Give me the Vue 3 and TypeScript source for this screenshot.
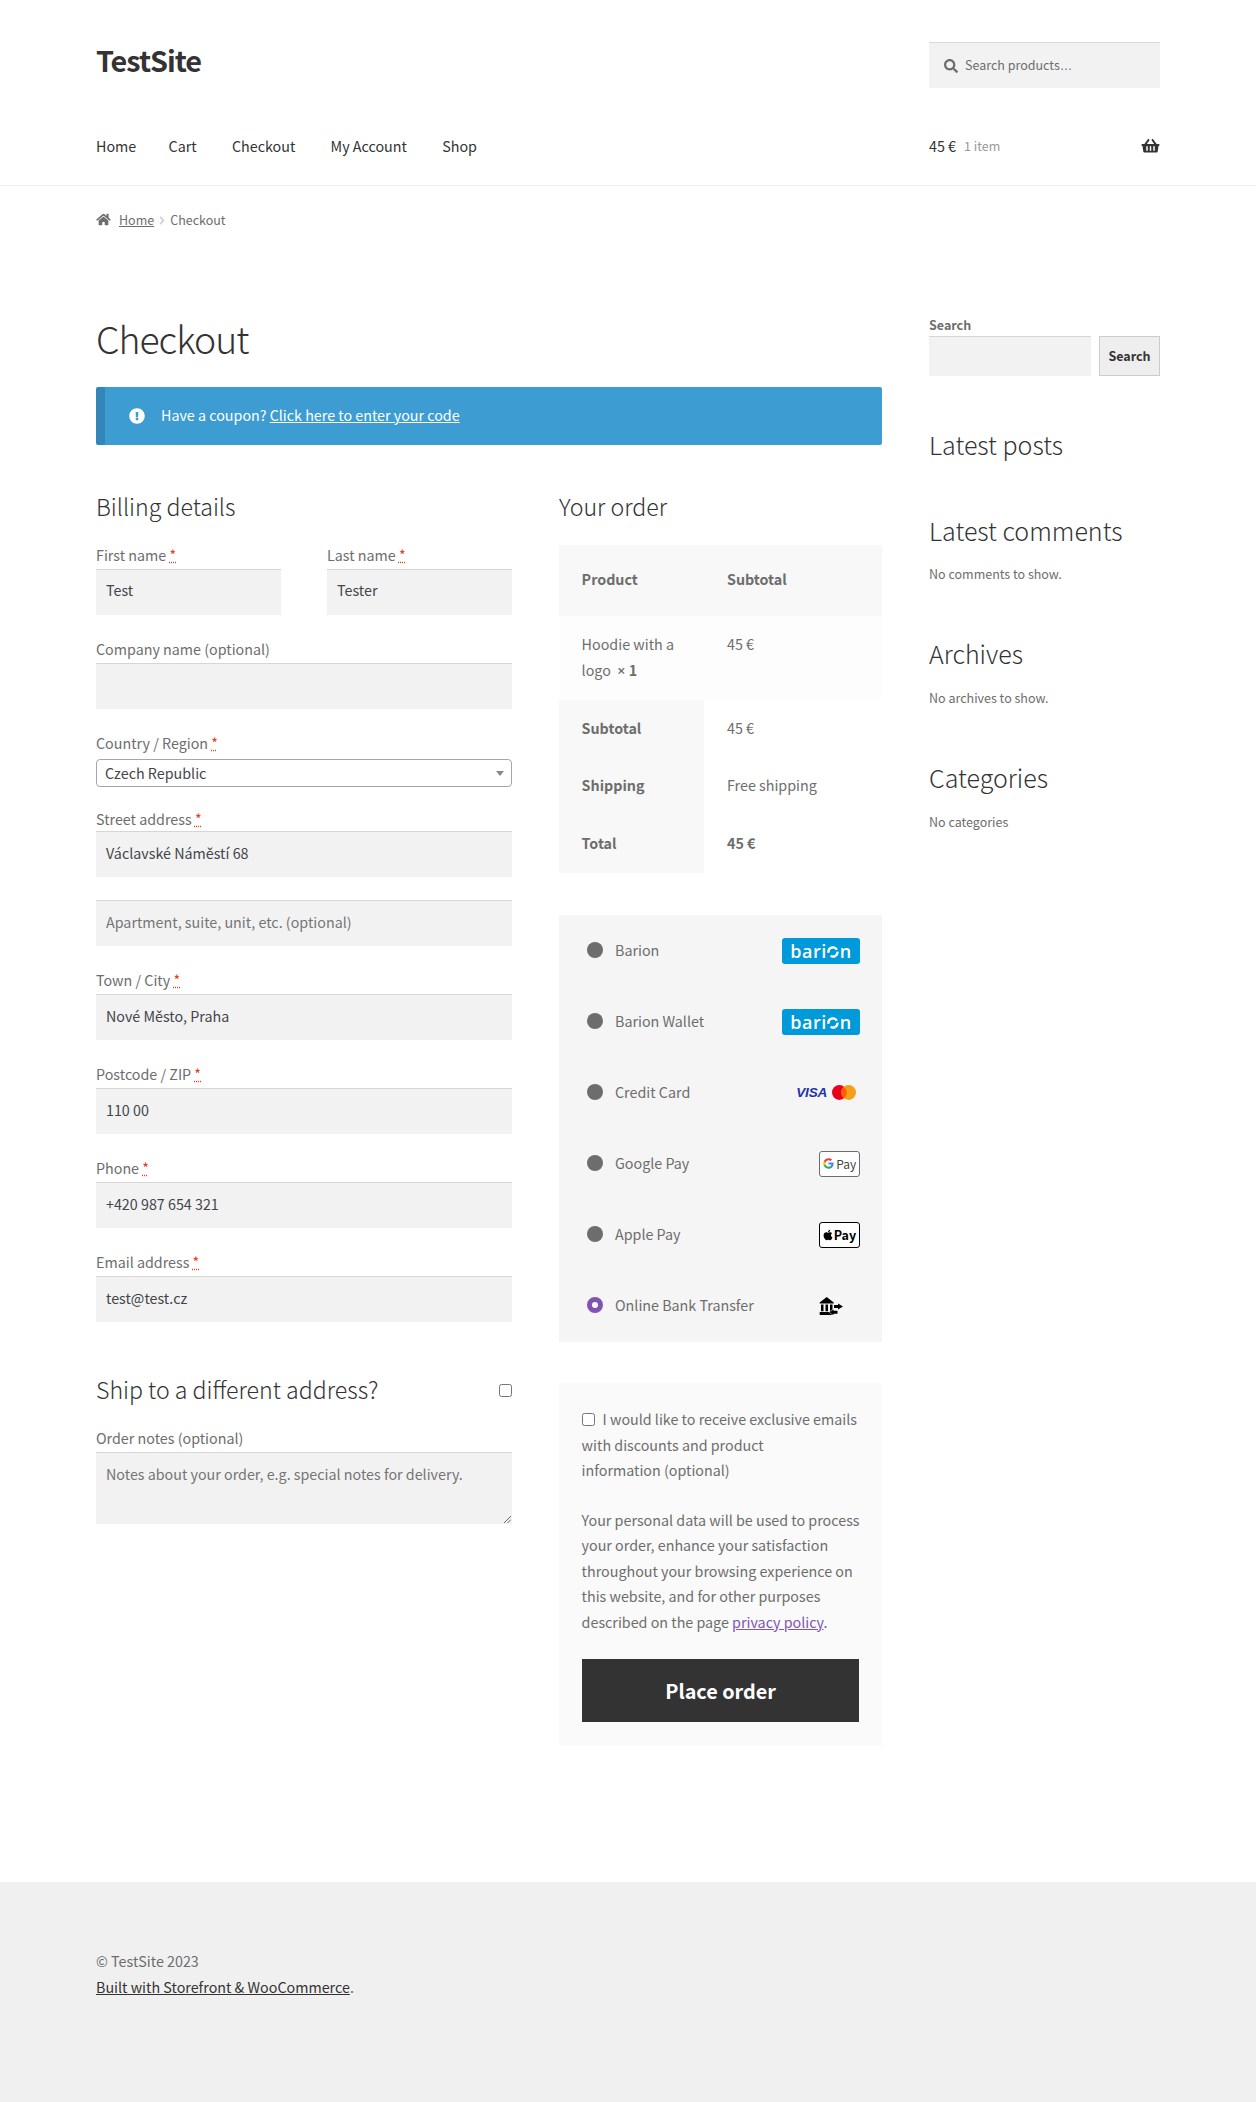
<script setup lang="ts">
interface Field { label: string; value?: string; req?: boolean }
const billingBottom: Field[] = [
  { label: 'Town / City', value: 'Nové Město, Praha', req: true },
  { label: 'Postcode / ZIP', value: '110 00', req: true },
  { label: 'Phone', value: '+420 987 654 321', req: true },
  { label: 'Email address', value: 'test@test.cz', req: true },
]
const nav = ['Home', 'Cart', 'Checkout', 'My Account', 'Shop']
const methods = [
  { name: 'Barion', logo: 'barion' },
  { name: 'Barion Wallet', logo: 'barion' },
  { name: 'Credit Card', logo: 'card' },
  { name: 'Google Pay', logo: 'gpay' },
  { name: 'Apple Pay', logo: 'apay' },
  { name: 'Online Bank Transfer', logo: 'bank', selected: true },
]
</script>

<template>
  <div class="page">
    <header class="masthead">
      <div class="wrap">
        <div class="brand-row">
          <div class="site-title">TestSite</div>
          <div class="product-search">
            <svg class="search-ic" viewBox="0 0 512 512"><path fill="#6d6d6d" d="M505 442.700L405.300 343c-4.500-4.500-10.600-7-17-7H372c27.600-35.300 44-79.700 44-128C416 93.100 322.900 0 208 0S0 93.100 0 208s93.100 208 208 208c48.300 0 92.700-16.400 128-44v16.300c0 6.400 2.500 12.500 7 17l99.700 99.700c9.400 9.400 24.600 9.400 33.900 0l28.300-28.300c9.400-9.400 9.400-24.600.1-34zM208 336c-70.700 0-128-57.200-128-128 0-70.700 57.200-128 128-128 70.700 0 128 57.200 128 128 0 70.700-57.200 128-128 128z"/></svg>
            <span>Search products<span class="ell">…</span></span>
          </div>
        </div>
        <div class="nav-row">
          <nav class="nav">
            <a v-for="n in nav" :key="n">{{ n }}</a>
          </nav>
          <div class="cart">
            <span class="amount">45 €</span><span class="count">1 item</span>
            <svg class="basket" viewBox="0 0 576 512"><path fill="#333" d="M576 216v16c0 13.300-10.700 24-24 24h-8l-26.100 182.800C515.600 454.500 501.700 464 486.600 464H89.400c-15.100 0-28.900-9.500-31.300-25.200L32 256h-8c-13.300 0-24-10.700-24-24v-16c0-13.300 10.700-24 24-24h67.300L198 45.400c10.400-14.300 30.400-17.500 44.700-7.100 14.300 10.400 17.500 30.400 7.100 44.700L170.400 192h235.200L326.200 83c-10.400-14.300-7.200-34.300 7.100-44.700 14.300-10.400 34.300-7.200 44.700 7.100L484.700 192H552c13.300 0 24 10.700 24 24zM312 392V280c0-13.300-10.700-24-24-24s-24 10.700-24 24v112c0 13.300 10.700 24 24 24s24-10.700 24-24zm112 0V280c0-13.300-10.700-24-24-24s-24 10.700-24 24v112c0 13.300 10.700 24 24 24s24-10.700 24-24zm-224 0V280c0-13.300-10.700-24-24-24s-24 10.700-24 24v112c0 13.300 10.700 24 24 24s24-10.700 24-24z"/></svg>
          </div>
        </div>
      </div>
    </header>

    <div class="wrap breadcrumb">
      <svg class="home-ic" viewBox="0 0 576 512"><path fill="#6d6d6d" d="M280.400 148.300L96 300.100V464a16 16 0 0 0 16 16l112-.3a16 16 0 0 0 15.900-16V368a16 16 0 0 1 16-16h64a16 16 0 0 1 16 16v95.600a16 16 0 0 0 16 16l112 .4a16 16 0 0 0 16-16V300L295.700 148.300a12.200 12.200 0 0 0-15.300 0zM571.600 251.500L488 182.600V44.100a12 12 0 0 0-12-12h-56a12 12 0 0 0-12 12v72.600L318.500 43a48 48 0 0 0-61 0L4.300 251.500a12 12 0 0 0-1.600 16.900l25.500 31A12 12 0 0 0 45.200 301l235.200-193.700a12.200 12.200 0 0 1 15.300 0L530.900 301a12 12 0 0 0 16.900-1.600l25.500-31a12 12 0 0 0-1.700-16.900z"/></svg>
      <a class="bc-home">Home</a>
      <svg class="bc-sep" viewBox="0 0 8 12"><path d="M1.500 1l4.500 5-4.500 5" fill="none" stroke="#ccc" stroke-width="2"/></svg>
      <span>Checkout</span>
    </div>

    <div class="wrap content">
      <main class="primary">
        <h1>Checkout</h1>
        <div class="notice">
          <svg class="notice-ic" viewBox="0 0 512 512"><path fill="#fff" d="M504 256c0 137-111 248-248 248S8 393 8 256 119 8 256 8s248 111 248 248zm-248 50c-25.400 0-46 20.600-46 46s20.600 46 46 46 46-20.600 46-46-20.600-46-46-46zm-43.700-165.300l7.400 136c.3 6.400 5.600 11.300 12 11.300h48.500c6.400 0 11.600-5 12-11.300l7.400-136c.4-6.900-5.100-12.700-12-12.700h-63.400c-6.900 0-12.400 5.800-12 12.700z"/></svg>
          <span class="notice-text">Have a coupon? <a>Click here to enter your code</a></span>
        </div>

        <div class="columns">
          <section class="billing">
            <h3>Billing details</h3>
            <div class="two">
              <div class="row">
                <label>First name <abbr>*</abbr></label>
                <div class="input">Test</div>
              </div>
              <div class="row">
                <label>Last name <abbr>*</abbr></label>
                <div class="input">Tester</div>
              </div>
            </div>
            <div class="row">
              <label>Company name (optional)</label>
              <div class="input"></div>
            </div>
            <div class="row country">
              <label>Country / Region <abbr>*</abbr></label>
              <div class="select">
                <span>Czech Republic</span>
                <i class="caret"></i>
              </div>
            </div>
            <div class="row street">
              <label class="tight">Street address <abbr>*</abbr></label>
              <div class="input">Václavské Náměstí 68</div>
              <div class="input ph apt">Apartment, suite, unit, etc. (optional)</div>
            </div>
            <div v-for="f in billingBottom" :key="f.label" class="row">
              <label>{{ f.label }} <abbr v-if="f.req">*</abbr></label>
              <div class="input">{{ f.value }}</div>
            </div>
            <div class="ship">
              <h3>Ship to a different address?</h3>
              <span class="check"></span>
            </div>
            <div class="row notes">
              <label>Order notes (optional)</label>
              <div class="input textarea ph">
                Notes about your order, e.g. special notes for delivery.
                <svg class="grip" viewBox="0 0 8 8"><path d="M0 8L8 0M4 8L8 4" stroke="#555" stroke-width="1" fill="none"/></svg>
              </div>
            </div>
          </section>

          <section class="order">
            <h3>Your order</h3>
            <div class="table">
              <div class="t-head">
                <div>Product</div><div>Subtotal</div>
              </div>
              <div class="t-item">
                <div>Hoodie with a logo&nbsp; <b><span class="latin">×</span> 1</b></div><div>45 €</div>
              </div>
              <div class="t-foot">
                <div class="tf"><div class="k">Subtotal</div><div class="v">45 €</div></div>
                <div class="tf"><div class="k">Shipping</div><div class="v">Free shipping</div></div>
                <div class="tf"><div class="k">Total</div><div class="v"><b>45 €</b></div></div>
              </div>
            </div>

            <div class="payment">
              <div v-for="m in methods" :key="m.name" class="method">
                <span class="radio" :class="{ on: m.selected }"></span>
                <span class="m-name">{{ m.name }}</span>
                <div class="logo">
                  <div v-if="m.logo === 'barion'" class="barion">bari<svg class="b-o" viewBox="0 0 20 20"><path d="M2.600 11.300A7.500 7.500 0 0 1 16.500 6.250" fill="none" stroke="#fff" stroke-width="4"/><path d="M17.500 9.300A7.500 7.500 0 0 1 6 16.400" fill="none" stroke="#fff" stroke-width="4"/></svg>n</div>
                  <div v-else-if="m.logo === 'card'" class="cards">
                    <span class="visa">VISA</span>
                    <svg class="mc" viewBox="0 0 26 16"><circle cx="8" cy="8" r="8" fill="#eb001b"/><circle cx="18" cy="8" r="8" fill="#f79e1b"/><path d="M13 1.700a8 8 0 0 1 0 12.600a8 8 0 0 1 0-12.600z" fill="#ff5f00"/></svg>
                  </div>
                  <div v-else-if="m.logo === 'gpay'" class="mark gpay">
                    <svg class="g" viewBox="0 0 24 24"><path fill="#4285f4" d="M23 12.300c0-.8-.1-1.600-.2-2.300H12v4.400h6.200c-.3 1.400-1.100 2.600-2.300 3.400v2.800h3.700c2.100-2 3.400-4.900 3.400-8.300z"/><path fill="#34a853" d="M12 23.500c3.100 0 5.700-1 7.600-2.800l-3.700-2.900c-1 .7-2.400 1.100-3.900 1.100-3 0-5.500-2-6.400-4.800H1.800v3c1.900 3.800 5.800 6.400 10.200 6.400z"/><path fill="#fbbc05" d="M5.600 14.100c-.5-1.400-.5-3 0-4.400v-3H1.800c-1.600 3.200-1.600 7.100 0 10.400l3.800-3z"/><path fill="#ea4335" d="M12 4.800c1.700 0 3.200.6 4.400 1.700l3.300-3.300C17.700 1.300 15 .3 12 .3 7.600.3 3.700 2.900 1.800 6.700l3.800 3c.9-2.800 3.400-4.900 6.400-4.900z"/></svg>
                    <span>Pay</span>
                  </div>
                  <div v-else-if="m.logo === 'apay'" class="mark apay">
                    <svg class="apple" viewBox="0 0 384 512"><path fill="#000" d="M318.700 268.700c-.2-36.700 16.400-64.400 50-84.800-18.800-26.900-47.200-41.700-84.700-44.600-35.500-2.800-74.300 20.700-88.500 20.700-15 0-49.400-19.700-76.400-19.700C63.300 141.200 4 184.800 4 273.500q0 39.300 14.400 81.200c12.800 36.700 59 126.700 107.200 125.200 25.200-.6 43-17.900 75.800-17.900 31.800 0 48.300 17.900 76.400 17.900 48.600-.7 90.400-82.500 102.600-119.300-65.200-30.700-61.700-90-61.700-91.900zm-56.600-164.200c27.300-32.400 24.800-61.900 24-72.500-24.100 1.400-52 16.400-67.900 34.900-17.500 19.800-27.800 44.300-25.600 71.900 26.100 2 49.900-11.400 69.500-34.300z"/></svg>
                    <span>Pay</span>
                  </div>
                  <svg v-else class="bank" viewBox="0 0 24 18">
                    <path fill="#000" d="M7.700 0L14.700 5.600V6.500H0.700V5.600zM2 7.500h2.500v6.800H2zM6.500 7.500h2.500v6.800H6.500zM11 7.500h2.500v6.800H11zM0.700 15h14v3h-14z"/>
                    <g stroke="#f5f5f5" stroke-width="1" paint-order="stroke" fill="#000">
                      <path d="M19 6.500L24 9.500L19 12.500V11H15V8H19z"/>
                      <path d="M14.500 12.500L10 15.250L14.500 18V16.700H18.500V13.800H14.500z"/>
                    </g>
                  </svg>
                </div>
              </div>
            </div>

            <div class="terms">
              <p class="opt"><span class="check small"></span>I would like to receive exclusive emails with discounts and product <span class="nowrap">information (optional)</span></p>
              <p class="privacy">Your personal data will be used to process your order, enhance your satisfaction throughout your browsing experience on this website, and for other purposes described on the page <a>privacy policy</a>.</p>
              <div class="place">Place order</div>
            </div>
          </section>
        </div>
      </main>

      <aside class="sidebar">
        <div class="search-w">
          <div class="s-label">Search</div>
          <div class="s-row">
            <div class="s-input"></div>
            <div class="s-btn">Search</div>
          </div>
        </div>
        <h4 class="latest">Latest posts</h4>
        <h4 class="comments">Latest comments</h4>
        <p class="none first">No comments to show.</p>
        <h4 class="arch">Archives</h4>
        <p class="none">No archives to show.</p>
        <h4 class="cats">Categories</h4>
        <p class="none">No categories</p>
      </aside>
    </div>

    <footer class="footer">
      <div class="wrap">
        <div>© TestSite 2023</div>
        <div><a>Built with Storefront &amp; WooCommerce</a>.</div>
      </div>
    </footer>
  </div>
</template>

<style>
html, body { margin: 0; background: #fff; }
</style>

<style scoped>
.page {
  font-family: "Noto Sans CJK SC", "Noto Sans", sans-serif;
  font-size: 14.300px;
  line-height: 26px;
  color: #6d6d6d;
  height: 2102px;
  overflow: hidden;
  position: relative;
}
.latin { font-family: "Noto Sans", sans-serif; }
.ell { font-family: "Liberation Sans", sans-serif; letter-spacing: 0.5px; }
.nowrap { white-space: nowrap; }
.wrap { width: 1064px; margin: 0 auto; box-sizing: border-box; }
a { color: inherit; }

.masthead { height: 186px; border-bottom: 1px solid #eee; box-sizing: border-box; }
.brand-row { display: flex; justify-content: space-between; padding-top: 42px; height: 127px; box-sizing: border-box; }
.site-title { font-size: 28.800px; font-weight: 700; color: #333; line-height: 36px; letter-spacing: -1px; }
.product-search {
  width: 231px; height: 46px; background: #f2f2f2; border-top: 1px solid #d9d9d9; box-sizing: border-box;
  display: flex; align-items: center; font-size: 12.500px; padding-left: 15px; gap: 7px;
}
.search-ic { width: 14px; height: 14px; }
.nav-row { display: flex; justify-content: space-between; align-items: center; height: 37px; color: #333; }
.nav { display: flex; gap: 35.300px; }
.nav a:first-child { margin-right: -3px; }
.cart { width: 231px; display: flex; align-items: center; position: relative; }
.count { font-size: 12.500px; color: #999; margin-left: 8px; }
.basket { width: 19px; height: 16px; margin-left: auto; }

.breadcrumb { height: 70px; padding-top: 21px; display: flex; align-items: flex-start; font-size: 12.500px; line-height: 26px; color: #6d6d6d; }
.home-ic { width: 15px; height: 13px; margin: 6px 8px 0 0; }
.bc-home { text-decoration: underline; }
.bc-sep { width: 6px; height: 9px; margin: 9px 5px 0 5px; }

.content { display: flex; justify-content: space-between; align-items: flex-start; }
.primary { width: 786px; }
h1 { margin: 52px 0 0; font-size: 37.400px; line-height: 60px; font-weight: 300; color: #333; letter-spacing: -1px; }
.notice {
  margin-top: 19px; height: 58px; background: #3d9cd2; border-left: 9px solid #3387b8; border-radius: 2px; box-sizing: border-box;
  color: #fff; display: flex; align-items: center; padding-left: 24px; gap: 16px;
}
.notice a { text-decoration: underline; }
.notice-text { margin-top: -2px; }
.notice-ic { width: 16px; height: 16px; }
.columns { display: flex; justify-content: space-between; }
h3 { font-size: 23.150px; font-weight: 300; color: #333; line-height: 38px; height: 40px; margin: 0; }
.billing { width: 416px; margin-top: 42px; }
.order { width: 323px; margin-top: 42px; }
.two { display: flex; justify-content: space-between; margin-top: 14px; }
.two .row { width: 185px; }
.two .input { line-height: 40px; }
.row { height: 94px; }
label { display: block; line-height: 28px; height: 28px; }
label.tight { height: 26px; }
abbr { color: #e2401c; text-decoration: underline dotted; }
.input {
  height: 46px; background: #f2f2f2; border-top: 1px solid #d6d6d6; box-sizing: border-box; padding-left: 10px;
  line-height: 41px; color: #43454b;
}
.input.ph { color: #757575; }
.country { height: 76px; }
.select {
  height: 28px; border: 1px solid #a6a6a6; border-radius: 4px; box-sizing: border-box; background: #fff; margin-top: 2px;
  color: #43454b; line-height: 25px; padding-left: 8px; position: relative;
}
.caret { position: absolute; right: 7px; top: 11px; border: 4px solid transparent; border-top: 5px solid #888; border-bottom: 0; }
.street { height: 161px; }
.apt { margin-top: 23px; }
.ship { display: flex; justify-content: space-between; align-items: center; margin-top: 28px; height: 40px; }
.check { display: inline-block; width: 13px; height: 13px; border: 1px solid #767676; border-radius: 2.500px; box-sizing: border-box; background: #fff; }
.notes { margin-top: 14px; }
.textarea { height: 72px; position: relative; line-height: 42px; }
.grip { position: absolute; right: 1px; bottom: 1px; width: 7px; height: 7px; }

.table { margin-top: 18px; }
.t-head { display: flex; height: 71px; background: #f8f8f8; font-weight: 600; align-items: center; padding-bottom: 3px; box-sizing: border-box; }
.t-head > div:first-child, .t-item > div:first-child { width: 100px; margin-left: 22.600px; margin-right: 45.400px; }
.t-item { display: flex; height: 84px; background: #fdfdfd; padding-top: 15px; box-sizing: border-box; }
.t-item b { font-weight: 600; }
.tf { display: flex; height: 57.700px; align-items: stretch; }
.k { width: 145px; background: #f8f8f8; font-weight: 600; padding: 0 0 2px 22.600px; box-sizing: border-box; display: flex; align-items: center; }
.v { padding: 0 0 2px 23px; display: flex; align-items: center; box-sizing: border-box; }
.tf:nth-child(2) .k, .tf:nth-child(2) .v { padding-bottom: 4px; }
.v b { font-weight: 600; }

.payment { margin-top: 42px; background: #f5f5f5; height: 427px; padding: 0 22px 0 28px; box-sizing: border-box; }
.method { height: 71px; display: flex; align-items: center; }
.m-name { margin-top: -2px; }
.radio { width: 16px; height: 16px; border-radius: 50%; background: #6d6d6d; margin: -1px 12px 0 0; box-sizing: border-box; }
.radio.on { background: #fff; border: 5px solid #7f54b3; }
.logo { margin-left: auto; display: flex; justify-content: flex-end; }
.barion { width: 78px; height: 26px; background: #0099d9; border-radius: 3px; color: #fff; display: flex; align-items: center; justify-content: center; font-family: "Open Sans", sans-serif; font-weight: 600; font-size: 18px; line-height: 26px; letter-spacing: 0.5px; }
.b-o { width: 12px; height: 12px; margin: 3px 0.500px 0; }
.cards { display: flex; align-items: center; gap: 5px; padding-right: 4px; }
.visa { font-family: "Liberation Sans", sans-serif; font-size: 13.500px; font-weight: 700; font-style: italic; color: #1a32b0; letter-spacing: -0.2px; }
.mc { width: 24px; height: 15px; }
.mark { width: 41px; height: 26px; border-radius: 3px; background: #fff; box-sizing: border-box; display: flex; align-items: center; justify-content: center; gap: 2.500px; font-size: 12px; color: #444; }
.gpay { border: 1px solid #6d6d6d; }
.g { width: 11px; height: 11px; }
.apay { border: 1px solid #000; color: #000; font-weight: 600; gap: 1px; font-size: 12.500px; }
.apple { width: 10px; height: 12px; }
.bank { width: 24px; height: 18px; margin-right: 17px; }

.terms { margin-top: 41px; height: 363px; background: #fafafa; padding: 23px 22.600px 0; box-sizing: border-box; line-height: 25.500px; }
.terms p { margin: 0; }
.check.small { margin-right: 8px; vertical-align: -1px; }
.terms .privacy { margin: 24px -4px 0 0; }
.privacy a { color: #7f54b3; text-decoration: underline; }
.place { margin-top: 25px; height: 63px; background: #333; color: #fff; font-size: 19.800px; font-weight: 600; display: flex; align-items: center; justify-content: center; }

.sidebar { width: 231px; margin-top: 60px; font-size: 12.500px; }
.s-label { font-weight: 600; color: #6d6d6d; line-height: 18px; height: 20px; }
.s-row { display: flex; justify-content: space-between; }
.s-input { width: 162px; height: 40px; background: #f2f2f2; border-top: 1px solid #d6d6d6; box-sizing: border-box; }
.s-btn { width: 61px; height: 40px; box-sizing: border-box; background: #eee; border: 1px solid #ccc; color: #333; font-weight: 600; display: flex; align-items: center; justify-content: center; }
h4 { font-size: 25px; font-weight: 300; color: #333; line-height: 40px; margin: 0; }
.latest { margin-top: 48px; }
.comments { margin-top: 46px; }
.none { margin: 15px 0 0; line-height: 20px; }
.none.first { margin-top: 14px; }
.arch { margin-top: 49px; }
.cats { margin-top: 49px; }

.footer { position: absolute; left: 0; right: 0; top: 1882px; height: 220px; background: #f0f0f0; padding-top: 66px; box-sizing: border-box; color: #6d6d6d; }
.footer a { color: #333; text-decoration: underline; }
</style>
